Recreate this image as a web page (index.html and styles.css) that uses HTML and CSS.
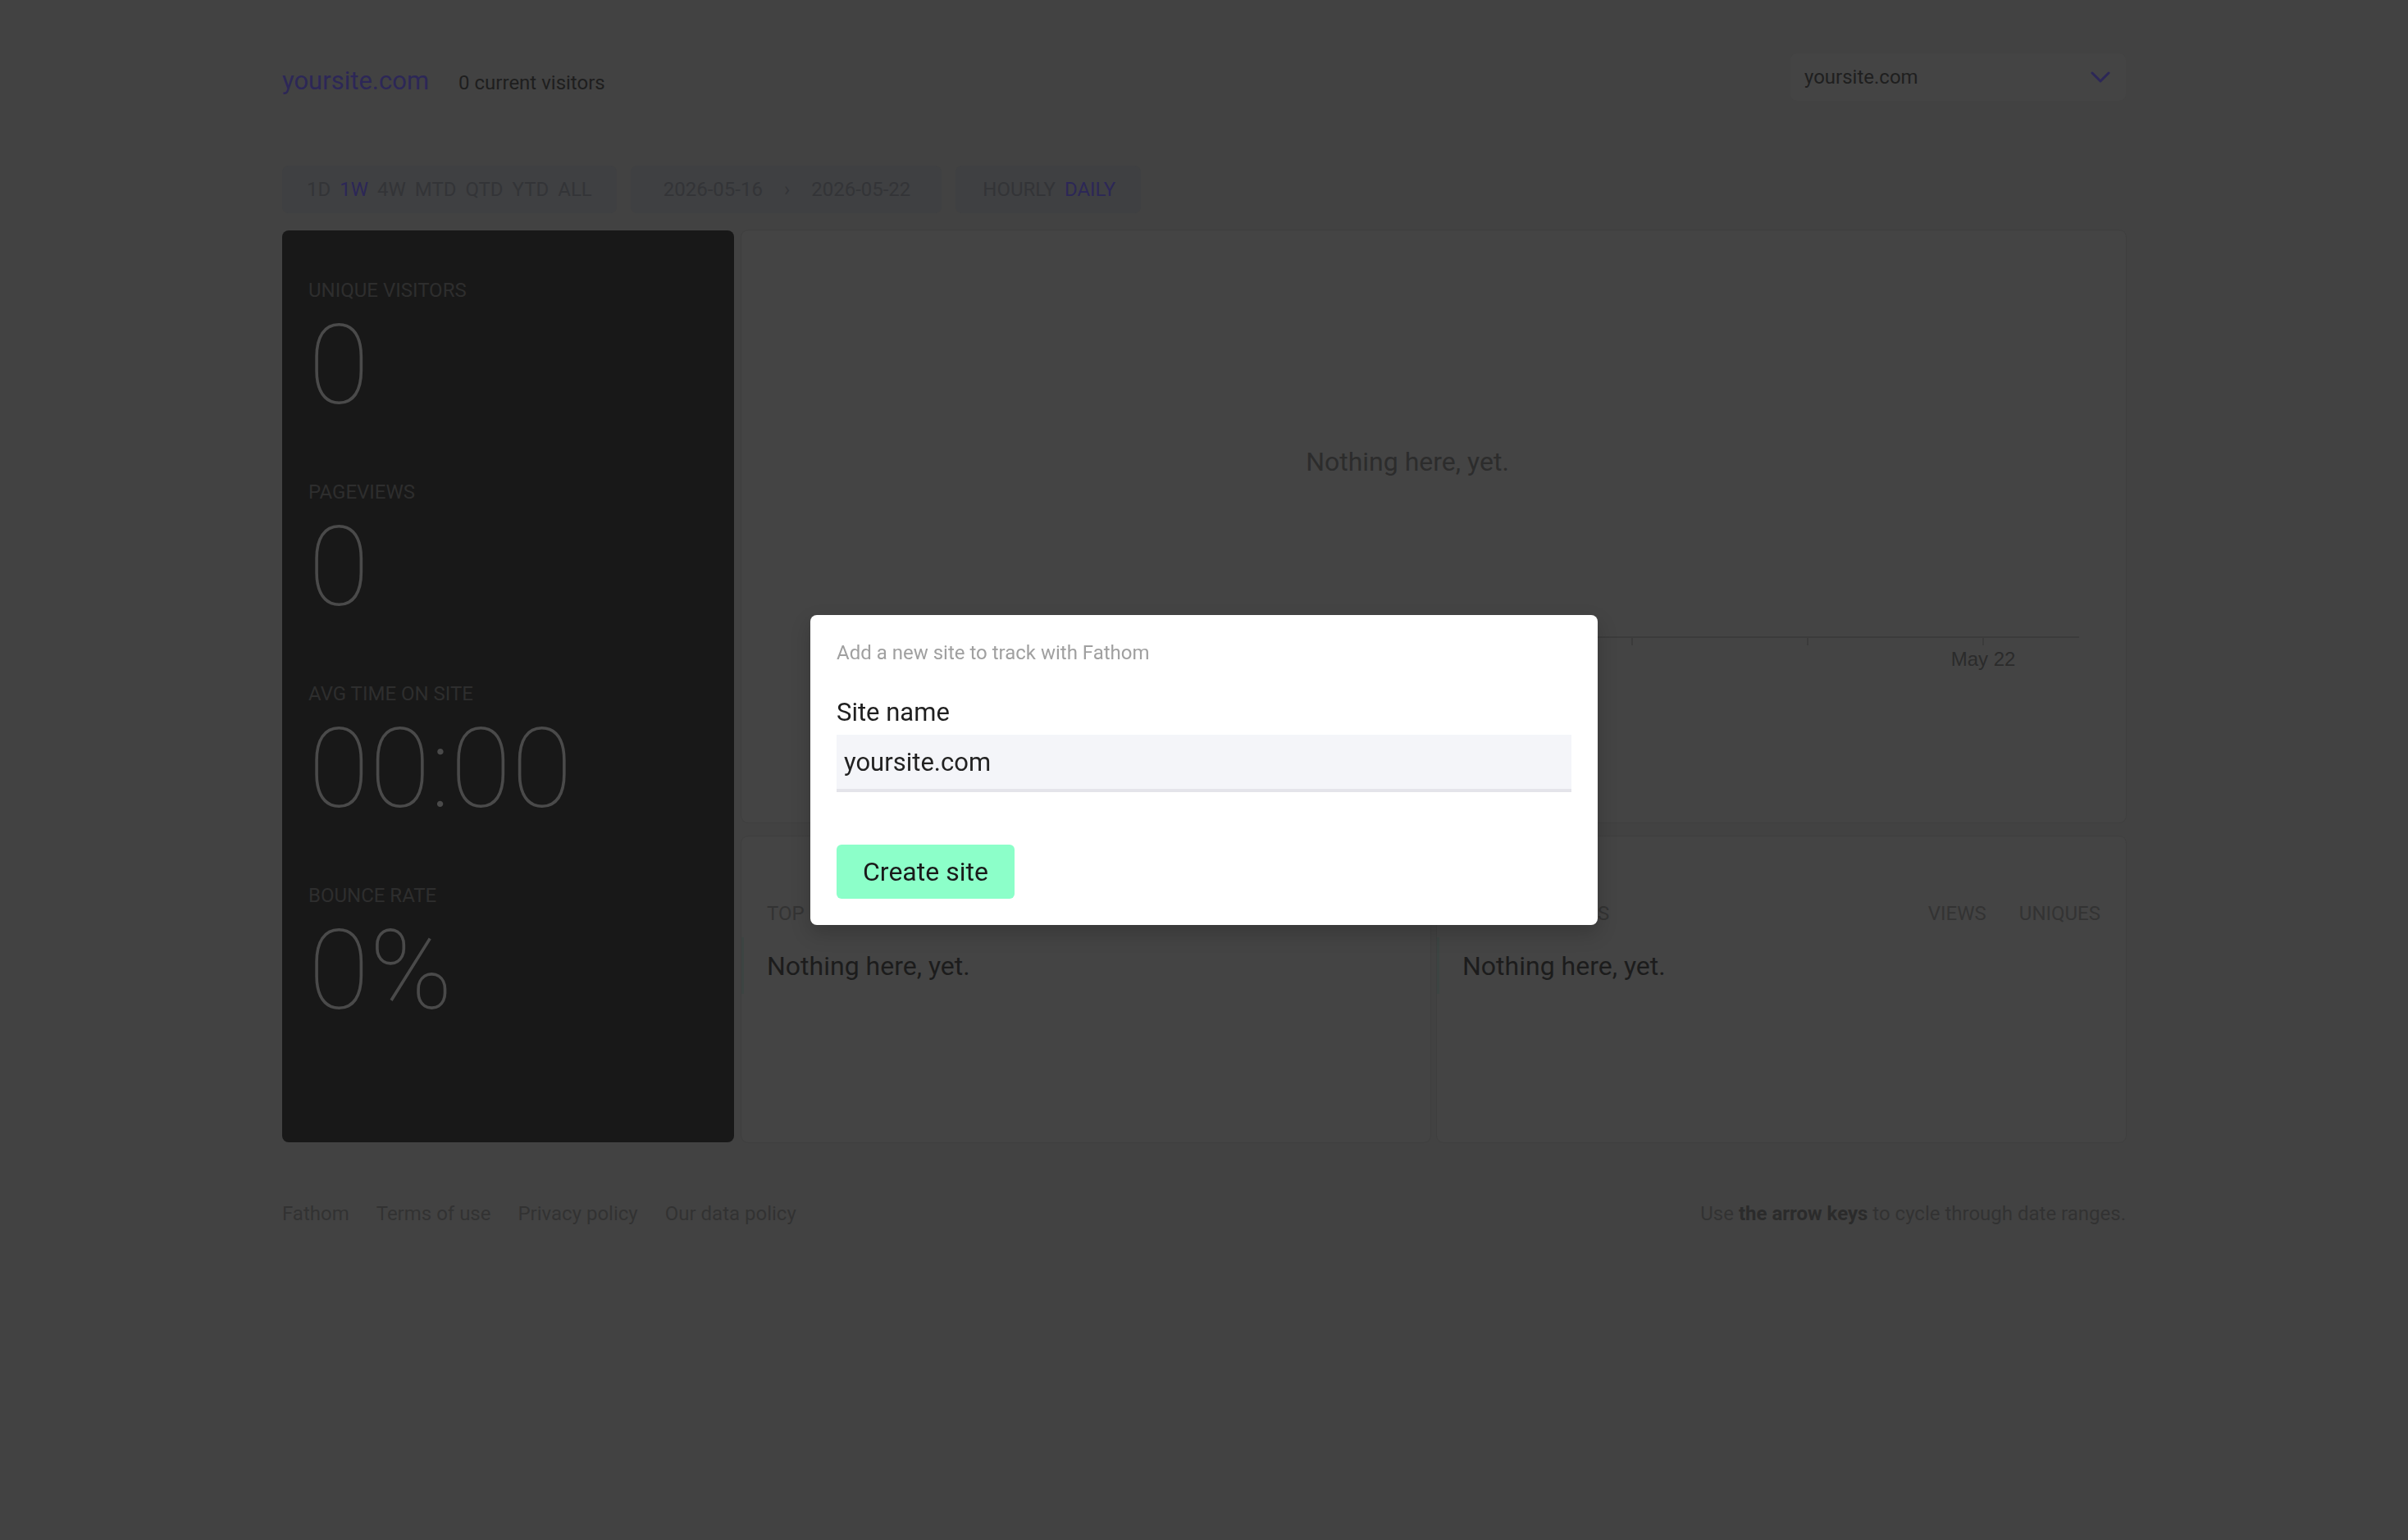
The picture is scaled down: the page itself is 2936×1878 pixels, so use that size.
FILE: index.html
```html
<!DOCTYPE html>
<html lang="en">
<head>
<meta charset="utf-8">
<title>yoursite.com · Fathom</title>
<link rel="stylesheet" href="styles.css">
</head>
<body>
<div class="app">
  <header class="topbar">
    <div class="site-heading">
      <span class="site-title">yoursite.com</span>
      <span class="realtime">0 current visitors</span>
    </div>
    <div class="site-switcher">
      <span>yoursite.com</span>
      <svg class="chevron" width="24" height="14" viewBox="0 0 24 14" aria-hidden="true">
        <polyline points="2,2 12,12 22,2" fill="none" stroke="currentColor" stroke-width="3" stroke-linecap="round" stroke-linejoin="round"/>
      </svg>
    </div>
  </header>

  <nav class="filters">
    <div class="filter-group periods">
      <span>1D</span>
      <span class="active">1W</span>
      <span>4W</span>
      <span>MTD</span>
      <span>QTD</span>
      <span>YTD</span>
      <span>ALL</span>
    </div>
    <div class="filter-group dates">
      <span>2026-05-16</span>
      <span class="sep">›</span>
      <span>2026-05-22</span>
    </div>
    <div class="filter-group grouping">
      <span>HOURLY</span>
      <span class="active">DAILY</span>
    </div>
  </nav>

  <main class="dashboard">
    <section class="totals">
      <div class="stat">
        <div class="stat-label">UNIQUE VISITORS</div>
        <div class="stat-value">0</div>
      </div>
      <div class="stat">
        <div class="stat-label">PAGEVIEWS</div>
        <div class="stat-value">0</div>
      </div>
      <div class="stat">
        <div class="stat-label">AVG TIME ON SITE</div>
        <div class="stat-value">00:00</div>
      </div>
      <div class="stat">
        <div class="stat-label">BOUNCE RATE</div>
        <div class="stat-value">0%</div>
      </div>
    </section>

    <section class="panels">
      <div class="card chart-card">
        <svg class="chart" width="1687" height="722" viewBox="0 0 1687 722">
          <text class="chart-empty" x="812" y="293" text-anchor="middle">Nothing here, yet.</text>
          <line class="axis" x1="116" y1="496" x2="1631" y2="496"/>
          <g class="ticks">
            <line x1="230" y1="496" x2="230" y2="506"/>
            <line x1="444" y1="496" x2="444" y2="506"/>
            <line x1="658" y1="496" x2="658" y2="506"/>
            <line x1="872" y1="496" x2="872" y2="506"/>
            <line x1="1086" y1="496" x2="1086" y2="506"/>
            <line x1="1300" y1="496" x2="1300" y2="506"/>
            <line x1="1514" y1="496" x2="1514" y2="506"/>
          </g>
          <g class="tick-labels" text-anchor="middle">
            <text x="1514" y="531">May 22</text>
          </g>
        </svg>
      </div>

      <div class="tables">
        <div class="card table-card">
          <div class="table-head">
            <span>TOP PAGES</span>
            <span class="cols"><span>VIEWS</span><span>UNIQUES</span></span>
          </div>
          <div class="table-row">Nothing here, yet.</div>
        </div>
        <div class="card table-card">
          <div class="table-head">
            <span>TOP REFERRERS</span>
            <span class="cols"><span>VIEWS</span><span>UNIQUES</span></span>
          </div>
          <div class="table-row">Nothing here, yet.</div>
        </div>
      </div>
    </section>
  </main>

  <footer class="footer">
    <nav class="footer-links">
      <a href="#">Fathom</a>
      <a href="#">Terms of use</a>
      <a href="#">Privacy policy</a>
      <a href="#">Our data policy</a>
    </nav>
    <p class="hint">Use <strong>the arrow keys</strong> to cycle through date ranges.</p>
  </footer>
</div>

<div class="modal-backdrop">
  <form class="modal">
    <p class="modal-intro">Add a new site to track with Fathom</p>
    <label class="field-label" for="site-name">Site name</label>
    <input id="site-name" class="field-input" type="text" value="yoursite.com">
    <button class="btn-create" type="button">Create site</button>
  </form>
</div>
</body>
</html>
```

FILE: styles.css
```css
html, body {
  margin: 0;
  background: #424242;
}

body {
  font-family: Roboto, "Liberation Sans", sans-serif;
  color: #2a2a2a;
}

.app {
  width: 2248px;
  margin: 0 auto;
  padding-top: 65px;
}

/* ---- top bar ---- */
.topbar {
  display: flex;
  justify-content: space-between;
  align-items: flex-start;
}

.site-heading {
  display: flex;
  align-items: baseline;
  margin-top: 14px;
}

.site-title {
  font-size: 31px;
  line-height: 40px;
  color: #2c2757;
}

.realtime {
  margin-left: 36px;
  font-size: 24px;
  line-height: 36px;
  color: #1e1e1e;
}

.site-switcher {
  width: 409px;
  height: 58px;
  box-sizing: border-box;
  padding: 0 19px 0 17px;
  display: flex;
  align-items: center;
  justify-content: space-between;
  background: #444444;
  border-radius: 8px;
  font-size: 24px;
  color: #1f1f1f;
}

.chevron {
  color: #2c2757;
}

/* ---- filters ---- */
.filters {
  display: flex;
  align-items: center;
  gap: 17px;
  margin-top: 79px;
}

.filter-group {
  display: flex;
  align-items: center;
  height: 58px;
  border-radius: 8px;
  background: #3f4042;
  font-size: 24px;
  color: #333437;
}

.periods {
  padding: 0 30px;
  gap: 11px;
}

.dates {
  padding: 0 38px 0 40px;
  gap: 26px;
}

.grouping {
  padding: 0 31px 0 33px;
  gap: 11px;
}

.filter-group .active {
  color: #2c2757;
}

/* ---- dashboard ---- */
.dashboard {
  display: flex;
  gap: 9px;
  margin-top: 21px;
}

.totals {
  width: 551px;
  height: 1112px;
  box-sizing: border-box;
  padding: 55px 32px 0;
  background: #181818;
  border-radius: 8px;
}

.stat-label {
  font-size: 24px;
  line-height: 36px;
  color: #2e2e2e;
}

.stat-value {
  margin: 6px 0 68px;
  font-size: 136px;
  line-height: 136px;
  font-weight: 100;
  color: #4a4a4a;
}

.panels {
  flex: 1;
  display: flex;
  flex-direction: column;
  gap: 17px;
}

.card {
  background: #444444;
  border-radius: 8px;
  box-shadow: 0 0 0 1px rgba(0, 0, 0, 0.05);
}

.chart-card {
  height: 722px;
}

.chart {
  display: block;
}

.chart-empty {
  font-family: Roboto, "Liberation Sans", sans-serif;
  font-size: 32px;
  fill: #2c2c2c;
}

.axis,
.ticks line {
  stroke: #3b3b3b;
  stroke-width: 2;
}

.tick-labels {
  font-family: "Liberation Sans", Arial, sans-serif;
  font-size: 24px;
  fill: #2b2b2b;
}

.tables {
  display: flex;
  gap: 8px;
  height: 373px;
}

.table-card {
  flex: 1;
  padding-top: 76px;
}

.table-head {
  display: flex;
  justify-content: space-between;
  padding: 0 31px;
  font-size: 24px;
  line-height: 36px;
  color: #333333;
}

.cols {
  display: flex;
  gap: 40px;
}

.table-row {
  display: flex;
  align-items: center;
  height: 69px;
  margin-top: 11px;
  padding-left: 28px;
  border-left: 3px solid #3c4442;
  font-size: 32px;
  color: #1c1c1c;
}

/* ---- footer ---- */
.footer {
  display: flex;
  justify-content: space-between;
  margin-top: 69px;
  font-size: 24px;
  line-height: 36px;
  color: #323232;
}

.footer-links {
  display: flex;
  gap: 33px;
}

.footer-links a {
  color: inherit;
  text-decoration: none;
}

.hint {
  margin: 0;
}

.hint strong {
  font-weight: 700;
  color: #2b2b2b;
}

/* ---- add-site dialog ---- */
.modal-backdrop {
  position: fixed;
  inset: 0;
  display: flex;
  align-items: center;
  justify-content: center;
}

.modal {
  width: 960px;
  box-sizing: border-box;
  padding: 34px 32px 32px;
  background: #ffffff;
  border-radius: 8px;
  box-shadow: 0 10px 24px rgba(0, 0, 0, 0.18);
}

.modal-intro {
  margin: 0;
  font-size: 24px;
  line-height: 24px;
  color: #a0a0a0;
}

.field-label {
  display: block;
  margin-top: 41px;
  font-size: 31px;
  line-height: 40px;
  color: #1f1f1f;
}

.field-input {
  display: block;
  width: 100%;
  height: 70px;
  margin: 7px 0 0;
  box-sizing: border-box;
  padding: 0 9px;
  border: 0;
  border-bottom: 4px solid #e4e4ea;
  border-radius: 0;
  background: #f4f5f9;
  font-family: Roboto, "Liberation Sans", sans-serif;
  font-size: 31px;
  color: #222222;
  outline: none;
}

.btn-create {
  display: block;
  height: 66px;
  margin-top: 64px;
  padding: 0 32px;
  border: 0;
  border-radius: 6px;
  background: #8cffc9;
  font-family: Roboto, "Liberation Sans", sans-serif;
  font-size: 32px;
  color: #1a1a1a;
}
```
